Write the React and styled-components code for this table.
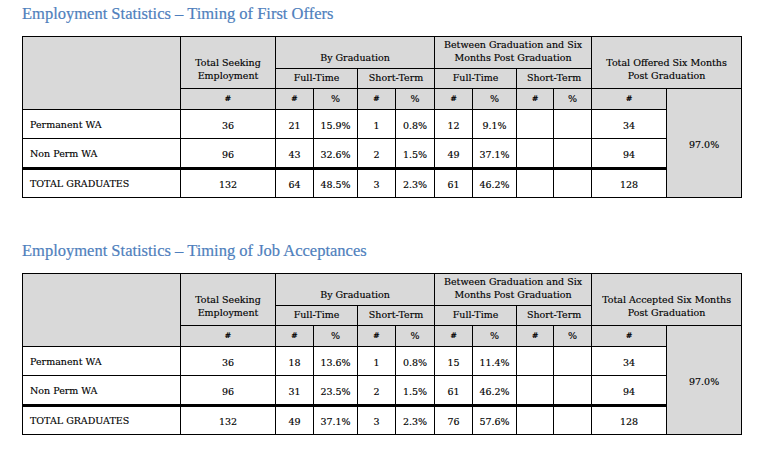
import React from 'react'
import styled, { createGlobalStyle } from 'styled-components'

const GlobalStyle = createGlobalStyle`
  html, body {
    margin: 0;
    padding: 0;
    background: #ffffff;
  }
`;

const Page = styled.div`
  width: 763px;
  height: 461px;
  padding: 0 0 0 22px;
  box-sizing: border-box;
  display: flex;
  flex-direction: column;
`;

const Section = styled.section`
  display: flex;
  flex-direction: column;
  margin-top: ${props => props.$top}px;
`;

const Title = styled.h2`
  margin: 0 0 12px 0;
  height: 20px;
  line-height: 20px;
  font-family: "Liberation Serif", serif;
  font-weight: normal;
  font-size: 16.5px;
  color: #4f7fbd;
  -webkit-text-stroke: 0.2px #4f7fbd;
`;

const Table = styled.table`
  border-collapse: collapse;
  table-layout: fixed;
  width: 719px;
  font-family: "DejaVu Serif", serif;
  font-size: 9.5px;
  color: #000;
  -webkit-text-stroke: 0.15px #000;
`;

const Row = styled.tr`
  height: ${props => props.$h}px;
`;

const HeadCell = styled.th`
  background: #d9d9d9;
  border: 1px solid #000;
  font-weight: normal;
  text-align: center;
  vertical-align: ${props => (props.$low ? 'bottom' : 'middle')};
  padding: 0 2px ${props => (props.$low ? props.$low : 0)}px;
  line-height: 12.5px;
  font-size: ${props => (props.$small ? '7.5px' : '9.5px')};
  ${props => props.$small && 'font-weight: bold;'}
`;

const LabelCell = styled.td`
  border: 1px solid #000;
  border-bottom-width: ${props => (props.$thick ? '3px' : '1px')};
  text-align: left;
  padding: 0 0 0 7px;
  vertical-align: middle;
  white-space: nowrap;
`;

const NumCell = styled.td`
  border: 1px solid #000;
  border-bottom-width: ${props => (props.$thick ? '3px' : '1px')};
  text-align: center;
  vertical-align: middle;
  padding: 2px 0 0 0;
  white-space: nowrap;
`;

const RateCell = styled.td`
  background: #d9d9d9;
  border: 1px solid #000;
  text-align: center;
  vertical-align: middle;
  padding-top: 3px;
`;

const widths = [158, 95, 38, 44, 38, 39, 38, 44, 37, 38, 75, 75];

const tables = [
  {
    title: 'Employment Statistics – Timing of First Offers',
    total: 'Total Offered Six Months',
    top: 4,
    rows: [
      ['Permanent WA', '36', '21', '15.9%', '1', '0.8%', '12', '9.1%', '', '', '34'],
      ['Non Perm WA', '96', '43', '32.6%', '2', '1.5%', '49', '37.1%', '', '', '94'],
      ['TOTAL GRADUATES', '132', '64', '48.5%', '3', '2.3%', '61', '46.2%', '', '', '128'],
    ],
    rate: '97.0%',
  },
  {
    title: 'Employment Statistics – Timing of Job Acceptances',
    total: 'Total Accepted Six Months',
    top: 43,
    rows: [
      ['Permanent WA', '36', '18', '13.6%', '1', '0.8%', '15', '11.4%', '', '', '34'],
      ['Non Perm WA', '96', '31', '23.5%', '2', '1.5%', '61', '46.2%', '', '', '94'],
      ['TOTAL GRADUATES', '132', '49', '37.1%', '3', '2.3%', '76', '57.6%', '', '', '128'],
    ],
    rate: '97.0%',
  },
];

const rowHeights = [29, 30, 29];

function StatsTable({ data }) {
  return (
    <Section $top={data.top}>
      <Title>{data.title}</Title>
      <Table>
        <colgroup>
          {widths.map((w, i) => (
            <col key={i} style={{ width: w }} />
          ))}
        </colgroup>
        <tbody>
          <Row $h={32}>
            <HeadCell rowSpan={3}></HeadCell>
            <HeadCell rowSpan={2} $low={6}>Total Seeking<br />Employment</HeadCell>
            <HeadCell colSpan={4} $low={4}>By Graduation</HeadCell>
            <HeadCell colSpan={4} $low={4}>Between Graduation and Six<br />Months Post Graduation</HeadCell>
            <HeadCell colSpan={2} rowSpan={2} $low={6}>{data.total}<br />Post Graduation</HeadCell>
          </Row>
          <Row $h={20}>
            <HeadCell colSpan={2}>Full-Time</HeadCell>
            <HeadCell colSpan={2}>Short-Term</HeadCell>
            <HeadCell colSpan={2}>Full-Time</HeadCell>
            <HeadCell colSpan={2}>Short-Term</HeadCell>
          </Row>
          <Row $h={21}>
            <HeadCell $small>#</HeadCell>
            <HeadCell $small>#</HeadCell>
            <HeadCell>%</HeadCell>
            <HeadCell $small>#</HeadCell>
            <HeadCell>%</HeadCell>
            <HeadCell $small>#</HeadCell>
            <HeadCell>%</HeadCell>
            <HeadCell $small>#</HeadCell>
            <HeadCell>%</HeadCell>
            <HeadCell $small>#</HeadCell>
            <RateCell rowSpan={4}>{data.rate}</RateCell>
          </Row>
          {data.rows.map((row, r) => (
            <Row key={r} $h={rowHeights[r]}>
              <LabelCell $thick={r === 1}>{row[0]}</LabelCell>
              {row.slice(1).map((v, c) => (
                <NumCell key={c} $thick={r === 1}>{v}</NumCell>
              ))}
            </Row>
          ))}
        </tbody>
      </Table>
    </Section>
  );
}

function App() {
  return (
    <>
      <GlobalStyle />
      <Page>
        {tables.map((t, i) => (
          <StatsTable key={i} data={t} />
        ))}
      </Page>
    </>
  );
}

export default App
